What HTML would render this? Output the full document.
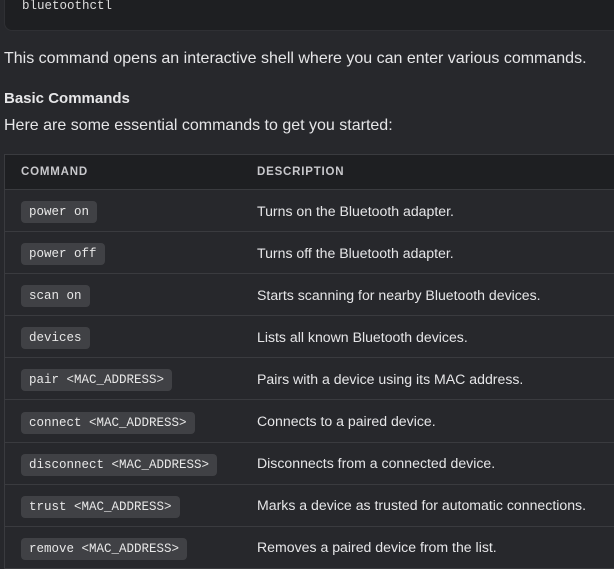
<!DOCTYPE html>
<html><head><style>
html,body{margin:0;background:#27282c;width:614px;height:565px;overflow:hidden;font-family:"Liberation Sans",sans-serif;color:#e6e6e8}
.pre{position:absolute;left:4px;top:-20px;width:640px;height:51px;background:#1e1f22;border-radius:8px;border:1px solid #2f3034;box-sizing:border-box}
.pre span{position:absolute;left:17px;top:18px;font:12.5px "Liberation Mono",monospace;color:#ddd}
p{position:absolute;left:4px;margin:0;font-size:16px;white-space:nowrap}
.h{font-weight:bold;font-size:15px}
table{position:absolute;left:4px;top:154px;width:660px;border-collapse:collapse;border:1px solid #3a3b3f;font-size:14.1px}
th{background:#1e1f22;height:34px;text-align:left;font-size:11.5px;letter-spacing:.8px;color:#c8c8cc;font-weight:bold;padding:0 0 0 16px}
td{height:41.1px;border-top:1px solid #3a3b3f;padding:0 0 0 16px;white-space:nowrap}
td:first-child{width:220px}
code{background:#404145;border-radius:4px;padding:4px 8px;font:12.5px "Liberation Mono",monospace;color:#e8e8e8}
</style></head><body>
<div class="pre"><span>bluetoothctl</span></div>
<p style="top:50px">This command opens an interactive shell where you can enter various commands.</p>
<p class="h" style="top:90px">Basic Commands</p>
<p style="top:117px">Here are some essential commands to get you started:</p>
<table>
<tr><th>COMMAND</th><th>DESCRIPTION</th></tr>
<tr><td><code>power on</code></td><td>Turns on the Bluetooth adapter.</td></tr>
<tr><td><code>power off</code></td><td>Turns off the Bluetooth adapter.</td></tr>
<tr><td><code>scan on</code></td><td>Starts scanning for nearby Bluetooth devices.</td></tr>
<tr><td><code>devices</code></td><td>Lists all known Bluetooth devices.</td></tr>
<tr><td><code>pair &lt;MAC_ADDRESS&gt;</code></td><td>Pairs with a device using its MAC address.</td></tr>
<tr><td><code>connect &lt;MAC_ADDRESS&gt;</code></td><td>Connects to a paired device.</td></tr>
<tr><td><code>disconnect &lt;MAC_ADDRESS&gt;</code></td><td>Disconnects from a connected device.</td></tr>
<tr><td><code>trust &lt;MAC_ADDRESS&gt;</code></td><td>Marks a device as trusted for automatic connections.</td></tr>
<tr><td><code>remove &lt;MAC_ADDRESS&gt;</code></td><td>Removes a paired device from the list.</td></tr>
</table>
</body></html>
